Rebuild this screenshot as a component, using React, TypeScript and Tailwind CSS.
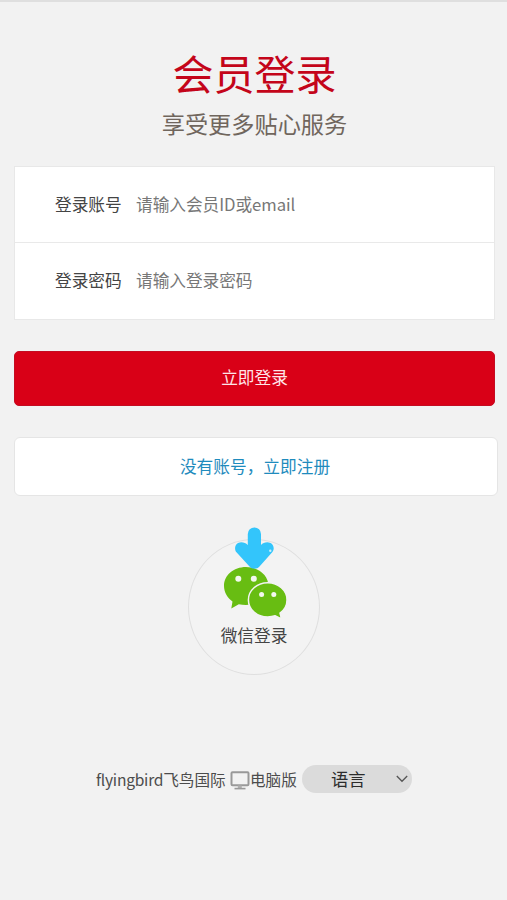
import React from 'react';

function Field({ label, placeholder, type }: { label: string; placeholder: string; type: string }) {
  return (
    <label className="flex h-[76px] items-center pb-[2px] pl-[40px] text-[16.7px] leading-6">
      <span className="w-[81px] shrink-0 text-[#444444]">{label}</span>
      <input
        type={type}
        placeholder={placeholder}
        className="min-w-0 flex-1 bg-transparent tracking-[-0.05px] outline-none placeholder:text-[#777777]"
      />
    </label>
  );
}

function DownArrow() {
  return (
    <svg width="40" height="43" viewBox="0 0 40 43" className="absolute left-[46px] top-[-13px]" fill="#33c5fb">
      <path d="M12.800 7a6.600 6.600 0 0 1 13.200 0v11c1.500-1.600 3.800-2.700 6.300-2.700 5.600 0 8.300 6 4.900 10L24.500 39.500c-2.500 3-7.500 3-10 0L1.700 25.600C-1.800 21.600.7 15.300 6.200 15.300c2.600 0 5 1 6.600 2.700Z" />
      <circle cx="35.300" cy="23.800" r="1.200" fill="#c7effd" />
    </svg>
  );
}

function WeChatLogo() {
  return (
    <svg width="66" height="54" viewBox="0 0 66 54" className="absolute left-[34px] top-[26px]" fill="#68bd12">
      <path d="M23 1C10.500 1 1 9.300 1 20c0 6.300 3.500 12 8.500 15.400L8.300 42.500l7.500-4.300c2.200.5 4.700.8 7.200.8 12.500 0 22.500-8.400 22.500-19S35.500 1 23 1Z" />
      <path
        d="M44.700 16.800c-10.700 0-19.300 7.600-19.300 17.100S34 51 44.700 51c2.700 0 5.200-.4 7.500-1.200l6.300 3.200-1.500-6c4.500-3.100 7-7.700 7-13.100 0-9.500-8.600-17.100-19.300-17.100Z"
        stroke="#f3f3f3"
        strokeWidth="1.500"
      />
      <g fill="#f3f8ef">
        <circle cx="15.300" cy="12.800" r="3" />
        <circle cx="30.800" cy="12.800" r="3" />
        <circle cx="38.600" cy="28.600" r="2.500" />
        <circle cx="50.800" cy="28.600" r="2.500" />
      </g>
    </svg>
  );
}

function Monitor() {
  return (
    <svg width="20" height="19" viewBox="0 0 20 19" className="mt-[2px] shrink-0" fill="none" stroke="#999999">
      <rect x="1.500" y="1.300" width="17" height="12.900" rx="1" strokeWidth="2" />
      <path d="M9.800 14.500v3" strokeWidth="4" stroke="#b0b0b0" />
      <path d="M4.500 17.600h11" strokeWidth="1.600" />
    </svg>
  );
}

export default function App() {
  return (
    <main className="flex h-[900px] w-[507px] flex-col border-t-2 border-[#dfdfdf] bg-[#f2f2f2] pl-[14px] font-['Noto_Sans_CJK_SC',sans-serif]">
      <header className="mt-[40px] flex w-[481px] flex-col items-center">
        <h1 className="h-[60px] text-[41px] leading-[60px] text-[#c4051a]">会员登录</h1>
        <p className="mt-[4px] h-[34px] text-[23.2px] leading-[34px] text-[#70665d]">享受更多贴心服务</p>
      </header>

      <form className="mt-[26px] w-[481px]">
        <div className="divide-y divide-[#e9e9e9] border border-[#e8e8e8] bg-white">
          <Field label="登录账号" placeholder="请输入会员ID或email" type="text" />
          <Field label="登录密码" placeholder="请输入登录密码" type="password" />
        </div>
        <button
          type="button"
          className="mt-[31px] block h-[55px] w-full rounded-[5px] border border-[#c40c22] bg-[#d90017] pb-[2px] text-[16.7px] text-[#ffe5e8]"
        >
          立即登录
        </button>
      </form>
      <button
        type="button"
        className="mt-[31px] h-[59px] w-[484px] rounded-[6px] border border-[#e5e5e5] bg-white pr-[2px] text-[16.7px] text-[#1f8bbd]"
      >
        没有账号，立即注册
      </button>

      <div className="relative ml-[174px] mt-[43px] flex h-[136px] w-[132px] shrink-0 justify-center rounded-[50%] border border-[#dfdfdf] bg-[#f3f3f3]">
        <WeChatLogo />
        <DownArrow />
        <span className="mt-[83px] h-6 text-[16.7px] leading-6 text-[#444444]">微信登录</span>
      </div>

      <footer className="ml-[82px] mt-[89px] flex h-[30px] items-center text-[15.6px] text-[#4c4c4c]">
        <span className="w-[134px] whitespace-nowrap pt-px"><span className="tracking-[-0.25px]">flyingbird</span>飞鸟国际</span>
        <Monitor />
        <span className="w-[52px] whitespace-nowrap pt-px">电脑版</span>
        <button type="button" className="flex h-[28px] w-[110px] items-center rounded-full bg-[#dbdbdb] pl-[29px] text-[17.3px] leading-7 text-[#2c2c2c]">
          <span className="w-[65px] pb-px text-left">语言</span>
          <svg width="12" height="8" viewBox="0 0 12 8" fill="none" stroke="#555555" strokeWidth="1.300">
            <path d="M.8 1 6 6.300 11.200 1" />
          </svg>
        </button>
      </footer>
    </main>
  );
}
